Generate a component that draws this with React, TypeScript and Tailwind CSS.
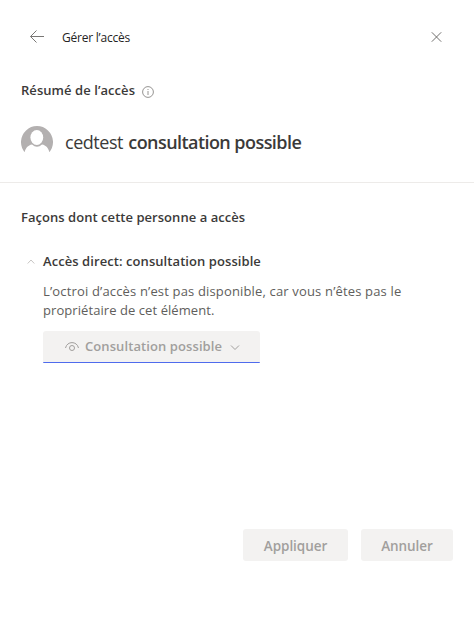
import type { ReactNode } from "react";

function FooterButton({ className, children }: { className: string; children: ReactNode }) {
  return (
    <button
      disabled
      className={`h-8 rounded-[3px] bg-[#f3f2f1] pt-[3px] text-[13.5px] font-semibold tracking-[-0.06px] text-[#a19f9d] ${className}`}
    >
      {children}
    </button>
  );
}

export default function App() {
  return (
    <div className="flex h-[644px] w-[474px] flex-col bg-white font-['Open_Sans','Noto_Sans',sans-serif] text-[#3b3a39]">
      <header className="flex h-[74px] items-center px-[29px]">
        <svg className="h-4 w-4" viewBox="0 0 16 16" fill="none" stroke="#797775">
          <path d="M15 7.5H1.5M7.5 1.5L1.5 7.5L7.5 13.5" />
        </svg>
        <h1 className="ml-[17px] whitespace-nowrap pt-0.5 text-xs font-medium tracking-[-0.22px] text-[#252423]">
          Gérer l’accès
        </h1>
        <svg className="ml-auto mr-[3px] h-[11px] w-[11px]" viewBox="0 0 11 11" fill="none" stroke="#605e5c" strokeWidth=".9">
          <path d="M.8 .3L10.2 9.7M10.2 .3L.8 9.7" />
        </svg>
      </header>

      <section className="h-[109px] border-b border-[#edebe9] px-[21px] pt-[7px]">
        <div className="flex h-5 items-center">
          <h2 className="w-[121px] whitespace-nowrap text-[13px] font-semibold tracking-[0.06px]">Résumé de l’accès</h2>
          <svg className="mt-0.5 h-3 w-3" viewBox="0 0 12 12" fill="none" stroke="#8a8886" strokeWidth=".9">
            <circle cx="6" cy="6" r="5.4" />
            <path d="M6 5V9M6 3V4" />
          </svg>
        </div>
        <div className="mt-[25px] flex h-8 items-center">
          <svg className="h-8 w-8" viewBox="0 0 32 32">
            <path
              d="M3.6 26.2A16 16 0 1 1 28.4 26.2C27.5 22 25 19 21 18.4Q16 23 11 18.4C7 19 4.5 22 3.6 26.2Z"
              fill="#b3b0b0"
            />
            <ellipse cx="15.8" cy="11.5" rx="6.4" ry="7.5" fill="#fff" />
          </svg>
          <p className="ml-3 whitespace-nowrap text-lg tracking-[-0.46px]">
            cedtest <span className="ml-px font-semibold tracking-[-0.56px]">consultation possible</span>
          </p>
        </div>
      </section>

      <main className="px-[21px] pt-[24px]">
        <h2 className="whitespace-nowrap text-[13px] leading-5 font-semibold tracking-[0.04px]">
          Façons dont cette personne a accès
        </h2>
        <div className="mt-[25px] flex h-5 items-center">
          <svg className="ml-1.5 h-2 w-2" viewBox="0 0 8 8" fill="none" stroke="#c8c6c4">
            <path d="M.7 5.5L4 2L7.3 5.5" />
          </svg>
          <h3 className="ml-2 whitespace-nowrap text-[13px] font-semibold tracking-[0.07px]">
            Accès direct: consultation possible
          </h3>
        </div>
        <div className="ml-[22px]">
          <p className="mt-[10px] whitespace-nowrap text-[13px] leading-[19px] tracking-[0.16px] text-[#605e5c]">
            L’octroi d’accès n’est pas disponible, car vous n’êtes pas le
            <br />
            <span className="tracking-[0.07px]">propriétaire de cet élément.</span>
          </p>
          <button
            disabled
            className="mt-[11px] flex h-8 w-[217px] items-center rounded-t-[3px] rounded-b-[1px] border-b border-[#4f6bed] bg-[#f3f2f1] pl-[21px] text-[13px] font-semibold text-[#a19f9d]"
          >
            <svg className="h-4 w-4" viewBox="0 0 16 16" fill="none" stroke="#a19f9d">
              <path d="M1.5 9C3 1.8 13 1.8 14.5 9" />
              <circle cx="8" cy="9" r="2.5" />
            </svg>
            <span className="ml-[5px] w-[144px] whitespace-nowrap text-left tracking-[0.09px]">
              Consultation possible
            </span>
            <svg className="h-3 w-3" viewBox="0 0 12 12" fill="none" stroke="#a19f9d">
              <path d="M2 4.5L6 8.5L10 4.5" />
            </svg>
          </button>
        </div>
      </main>

      <footer className="mt-auto mb-[83px] flex justify-end gap-[13px] pr-[21px]">
        <FooterButton className="w-[105px]">Appliquer</FooterButton>
        <FooterButton className="w-[92px]">Annuler</FooterButton>
      </footer>
    </div>
  );
}
